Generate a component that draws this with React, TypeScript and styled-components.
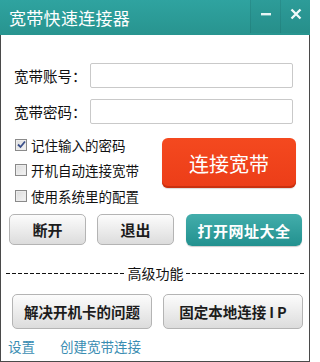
import React from "react";
import styled, { createGlobalStyle } from "styled-components";

const Global = createGlobalStyle`
  html, body { margin: 0; padding: 0; background: #ffffff; }
  body { width: 311px; height: 362px; overflow: hidden; font-family: "Noto Sans CJK SC", "Noto Sans", sans-serif; }
  * { box-sizing: border-box; }
`;

const Win = styled.div`
  width: 310px;
  height: 362px;
  display: flex;
  flex-direction: column;
  border-left: 1px solid #4a4a4a;
  border-right: 1px solid #4a4a4a;
  border-bottom: 1px solid #4a4a4a;
  background: #ffffff;
`;

const TitleBar = styled.div`
  height: 35px;
  margin: 0 -1px 0 -1px;
  display: flex;
  align-items: flex-start;
  background: linear-gradient(#2fa3a0, #28948f);
  flex-shrink: 0;
`;

const Title = styled.div`
  flex: 1;
  height: 35px;
  display: flex;
  align-items: center;
  padding-left: 9px;
  color: #ffffff;
  font-size: 17px;
  letter-spacing: 0.3px;
  padding-bottom: 1px;
`;

const Ctrl = styled.div`
  width: 30px;
  height: 33px;
  display: flex;
  justify-content: center;
  padding-top: 8px;
  background: rgba(0, 0, 0, 0.04);
  border-left: 1px solid rgba(0, 0, 0, 0.08);
`;

const Body = styled.div`
  flex: 1;
  display: flex;
  flex-direction: column;
  padding: 28px 0 0 0;
`;

const FormRow = styled.div`
  display: flex;
  align-items: center;
  height: 25px;
  padding-left: 13px;
  margin-bottom: 11px;
`;

const Label = styled.div`
  width: 76px;
  font-size: 14.5px;
  color: #111;
`;

const Input = styled.input`
  width: 203px;
  height: 25px;
  border: 1px solid #c9c9c9;
  border-radius: 2px;
  background: #fff;
  outline: none;
`;

const Middle = styled.div`
  display: flex;
  margin-top: 2px;
  height: 76px;
`;

const Checks = styled.div`
  width: 161px;
  display: flex;
  flex-direction: column;
  padding: 1px 0 0 14px;
  gap: 12.5px;
`;

const CheckRow = styled.div`
  display: flex;
  align-items: center;
  height: 13px;
  gap: 4px;
  font-size: 13.5px;
  color: #111;
`;

const Box = styled.span`
  width: 12px;
  height: 12px;
  border: 1px solid #8a8a8a;
  background: linear-gradient(135deg, #dcdcdc, #f4f4f4);
  box-shadow: inset 0 0 0 1px #ececec;
  display: flex;
  align-items: center;
  justify-content: center;
  flex-shrink: 0;
`;

const ConnectBtn = styled.div`
  width: 134px;
  height: 50px;
  margin-top: 1px;
  border-radius: 6px;
  background: linear-gradient(#f4491f, #ec3d18);
  box-shadow: inset 0 -2px 0 #c9300f, 0 1px 1px rgba(0,0,0,0.15);
  color: #fff;
  font-size: 20px;
  display: flex;
  align-items: center;
  justify-content: center;
`;

const BtnRow = styled.div<{ $top: number; $pad: number }>`
  display: flex;
  margin-top: ${(p) => p.$top}px;
  padding-left: ${(p) => p.$pad}px;
  gap: 11px;
`;

const GrayBtn = styled.div<{ $w: number; $h: number; $size: number }>`
  width: ${(p) => p.$w}px;
  height: ${(p) => p.$h}px;
  border: 1px solid #b4b4b4;
  border-radius: 5px;
  background: linear-gradient(#fcfcfc, #e9e9e9 60%, #dcdcdc);
  color: #1c1c1c;
  font-size: ${(p) => p.$size}px;
  font-weight: 700;
  display: flex;
  align-items: center;
  justify-content: center;
`;

const Spaced = styled.span`
  letter-spacing: 3px;
  margin-left: 3px;
  margin-right: -3px;
`;

const TealBtn = styled.div`
  width: 116px;
  height: 32px;
  margin-left: 1px;
  border-radius: 6px;
  background: linear-gradient(#43adab, #22918f);
  box-shadow: 0 1px 1px rgba(0,0,0,0.2);
  color: #fff;
  font-size: 15px;
  font-weight: 700;
  letter-spacing: 0.5px;
  display: flex;
  align-items: center;
  justify-content: center;
`;

const Divider = styled.div`
  display: flex;
  align-items: center;
  margin-top: 17px;
  padding: 0 4px 0 5px;
  gap: 2px;
  font-size: 14px;
  color: #111;
`;

const Dash = styled.div`
  flex: 1;
  height: 1px;
  background: repeating-linear-gradient(90deg, #111 0 4px, transparent 4px 6px);
`;

const Links = styled.div`
  display: flex;
  gap: 25px;
  padding-left: 7px;
  margin-top: 7px;
  font-size: 13.5px;
  color: #3a8db2;
`;

const Check = ({ checked }: { checked?: boolean }) => (
  <Box>
    {checked && (
      <svg width="9" height="9" viewBox="0 0 9 9">
        <path d="M1 4.5 L3.5 7 L8 1.5" stroke="#3a4f8a" strokeWidth="1.8" fill="none" />
      </svg>
    )}
  </Box>
);

export default function App() {
  return (
    <>
      <Global />
      <Win>
        <TitleBar>
          <Title>宽带快速连接器</Title>
          <Ctrl>
            <svg width="12" height="12" viewBox="0 0 12 12">
              <rect x="1" y="5" width="10" height="2.4" fill="#e8f4f4" />
            </svg>
          </Ctrl>
          <Ctrl>
            <svg width="12" height="12" viewBox="0 0 12 12">
              <path d="M1.5 1.5 L10.5 10.5 M10.5 1.5 L1.5 10.5" stroke="#f2fafa" strokeWidth="2.3" />
            </svg>
          </Ctrl>
        </TitleBar>
        <Body>
          <FormRow>
            <Label>宽带账号：</Label>
            <Input />
          </FormRow>
          <FormRow>
            <Label>宽带密码：</Label>
            <Input type="password" />
          </FormRow>
          <Middle>
            <Checks>
              <CheckRow>
                <Check checked />
                记住输入的密码
              </CheckRow>
              <CheckRow>
                <Check />
                开机自动连接宽带
              </CheckRow>
              <CheckRow>
                <Check />
                使用系统里的配置
              </CheckRow>
            </Checks>
            <ConnectBtn>连接宽带</ConnectBtn>
          </Middle>
          <BtnRow $top={1} $pad={8}>
            <GrayBtn $w={77} $h={31} $size={15}>断开</GrayBtn>
            <GrayBtn $w={77} $h={31} $size={15}>退出</GrayBtn>
            <TealBtn>打开网址大全</TealBtn>
          </BtnRow>
          <Divider>
            <Dash />
            高级功能
            <Dash />
          </Divider>
          <BtnRow $top={11} $pad={11}>
            <GrayBtn $w={140} $h={35} $size={14.5}>解决开机卡的问题</GrayBtn>
            <GrayBtn $w={140} $h={35} $size={14.5}>
              固定本地连接<Spaced>IP</Spaced>
            </GrayBtn>
          </BtnRow>
          <Links>
            <span>设置</span>
            <span>创建宽带连接</span>
          </Links>
        </Body>
      </Win>
    </>
  );
}
